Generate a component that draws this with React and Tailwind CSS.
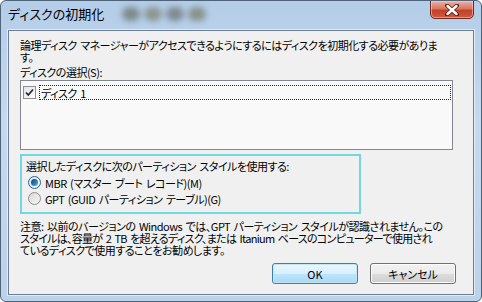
import React from "react";

// ディスクの初期化 ダイアログ (Windows 7 Aero 風)

const font =
  "font-['Noto_Sans_CJK_JP','Noto_Sans',sans-serif] [font-feature-settings:'palt']";

function CheckBox() {
  return (
    <span className="w-[13px] h-[13px] border border-[#8e8f8f] bg-gradient-to-br from-[#e4e4e4] to-[#fdfdfd] flex items-center justify-center shrink-0">
      <svg width="9" height="9" viewBox="0 0 9 9">
        <path d="M1 4.5 L3.3 7 L8 1.5" fill="none" stroke="#1f2a3a" strokeWidth="1.8" />
      </svg>
    </span>
  );
}

function Radio({ checked }) {
  return (
    <span
      className={`w-[13px] h-[13px] rounded-full border shrink-0 flex items-center justify-center ${
        checked
          ? "border-[#2c628b] bg-gradient-to-br from-[#d8e6f2] to-[#f6f9fc]"
          : "border-[#8f8f8f] bg-gradient-to-br from-[#d9d9d9] to-[#f7f7f7]"
      }`}
    >
      {checked && (
        <span className="w-[7px] h-[7px] rounded-full bg-gradient-to-br from-[#0f3b68] to-[#4fb1ef]" />
      )}
    </span>
  );
}

function Button({ children, primary }) {
  return (
    <div
      className={`w-[86px] h-[21px] rounded-[3px] border flex items-center justify-center text-[11px] tracking-normal text-black ${
        primary
          ? "border-[#3c7fb1] bg-[linear-gradient(#eaf6fd_0%,#d9f0fc_50%,#bee6fd_51%,#a7d9f5_100%)] shadow-[inset_0_0_0_1px_#c4e5f6]"
          : "border-[#707070] bg-[linear-gradient(#f2f2f2_0%,#ebebeb_50%,#dddddd_51%,#cfcfcf_100%)] shadow-[inset_0_0_0_1px_#fcfcfc]"
      }`}
    >
      {children}
    </div>
  );
}

export default function App() {
  return (
    <div
      className={`w-[482px] h-[302px] relative overflow-hidden rounded-[6px] border border-[#4f6479] bg-[linear-gradient(180deg,#b4cde8_0%,#c6d9ee_40%,#bcd2ea_100%)] ${font}`}
    >
      {/* タイトルバー */}
      <div className="h-[29px] flex items-start pl-[7px] pt-[4px]">
        <span className="text-[13px] leading-[18px] text-black whitespace-nowrap">
          ディスクの初期化
        </span>
        <div className="flex gap-[4px] ml-[18px] mt-[2px] blur-[3px]">
          <span className="w-[18px] h-[14px] rounded-full bg-[#7c8a8c]" />
          <span className="w-[18px] h-[14px] rounded-full bg-[#8a9690]" />
          <span className="w-[18px] h-[14px] rounded-full bg-[#7d8a90]" />
          <span className="w-[18px] h-[14px] rounded-full bg-[#86928c]" />
        </div>
      </div>

      {/* 閉じるボタン */}
      <div className="absolute left-[429px] top-[-1px] w-[44px] h-[19px] rounded-b-[5px] border border-[#6a2b22] bg-[linear-gradient(#eab1a6_0%,#d9765f_45%,#c2412b_55%,#cf5a3e_100%)] shadow-[inset_0_0_0_1px_rgba(255,220,210,0.5)] flex items-center justify-center">
        <svg width="14" height="12" viewBox="0 0 14 12">
          <path d="M2 1.5 L12 10.5 M12 1.5 L2 10.5" stroke="#5a2018" strokeWidth="4" strokeLinecap="round" />
          <path d="M2.5 2 L11.5 10 M11.5 2 L2.5 10" stroke="#ffffff" strokeWidth="2.4" strokeLinecap="round" />
        </svg>
      </div>

      {/* クライアント領域 */}
      <div className="mx-[7px] h-[265px] border border-[#6e7f91] bg-[#f0f0f0] pl-[11px] pr-[20px] pt-[8px] text-[11px] leading-[12px] tracking-[-0.5px] [word-spacing:1.5px] text-black shadow-[0_0_0_1px_rgba(255,255,255,0.55)]">
        <div className="whitespace-nowrap">
          論理ディスク マネージャーがアクセスできるようにするにはディスクを初期化する必要がありま
        </div>
        <div className="whitespace-nowrap">す。</div>
        <div className="mt-[3px] whitespace-nowrap">ディスクの選択(S):</div>

        <div className="mt-[2px] h-[70px] border border-[#828790] bg-[#f9f9f9] pt-[4px] pl-[2px] pr-[1px]">
          <div className="flex items-center gap-[3px]">
            <CheckBox />
            <div className="flex-1 h-[15px] border border-dotted border-[#222] flex items-center pl-[1px]">
              ディスク 1
            </div>
          </div>
        </div>

        <div className="mt-[4px] w-[341px] h-[60px] border-2 border-[#70d8de] pl-[4px] pt-[4px]">
          <div className="whitespace-nowrap">
            選択したディスクに次のパーティション スタイルを使用する:
          </div>
          <div className="mt-[4px] flex items-center gap-[4px] pl-[2px]">
            <Radio checked />
            <span>MBR (マスター ブート レコード)(M)</span>
          </div>
          <div className="mt-[3px] flex items-center gap-[4px] pl-[2px]">
            <Radio />
            <span>GPT (GUID パーティション テーブル)(G)</span>
          </div>
        </div>

        <div className="mt-[6px] whitespace-nowrap">
          注意: 以前のバージョンの Windows では、GPT パーティション スタイルが認識されません。この
        </div>
        <div className="whitespace-nowrap tracking-[-0.7px]">
          スタイルは、容量が 2 TB を超えるディスク、または Itanium ベースのコンピューターで使用され
        </div>
        <div className="whitespace-nowrap">ているディスクで使用することをお勧めします。</div>

        <div className="mt-[7px] flex justify-end gap-[12px] mr-[-3px]">
          <Button primary>OK</Button>
          <Button>キャンセル</Button>
        </div>
      </div>
    </div>
  );
}
